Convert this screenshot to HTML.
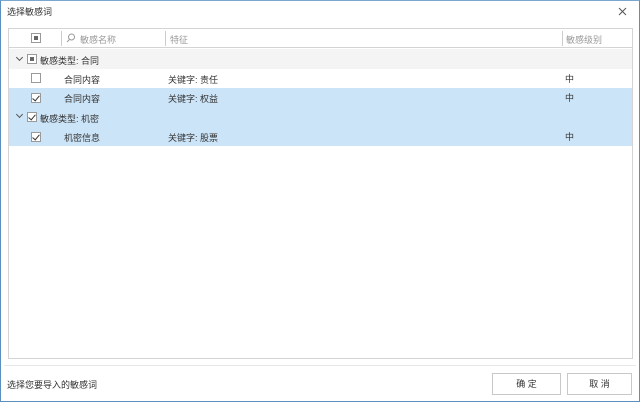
<!DOCTYPE html>
<html><head><meta charset="utf-8"><style>
*{margin:0;padding:0;box-sizing:border-box}
body{width:640px;height:402px;background:#fff;font-family:"Liberation Sans","Noto Sans CJK SC",sans-serif;font-size:9px;color:#333;position:relative;overflow:hidden}
.win{position:absolute;left:0;top:0;width:640px;height:402px;border:1px solid #5a8fc0;border-top:1px solid #7aa7d0}
.abs{position:absolute;white-space:nowrap}
.grid{position:absolute;left:8px;top:28px;width:625px;height:331px;border:1px solid #d4d4d4}
.row{position:absolute;left:0;width:623px}
.cb{position:absolute;width:10px;height:10px;border:1px solid #9a9a9a;background:#fff}
.cb.ind::after{content:"";position:absolute;left:2px;top:2px;width:4px;height:4px;background:#666}
.cb.chk::after{content:"";position:absolute;left:2px;top:0px;width:3px;height:6px;border-right:1.3px solid #333;border-bottom:1.3px solid #333;transform:rotate(40deg)}
.sep{position:absolute;top:2px;width:1px;height:15px;background:#ccc}
.chev{position:absolute;width:5px;height:5px;border-right:1.2px solid #555;border-bottom:1.2px solid #555;transform:rotate(45deg)}
.btn{position:absolute;top:373px;height:22px;border:1px solid #c8c8c8;background:#fff;text-align:center;line-height:20px;font-size:9px}
</style></head><body><div class="win"></div>
<div class="abs" style="left:7px;top:5px;font-size:9px;color:#333">选择敏感词</div>
<svg class="abs" style="left:618px;top:7px" width="9" height="9"><path d="M1 1L8 8M8 1L1 8" stroke="#555" stroke-width="1"/></svg>
<div class="grid">
 <div class="row" style="top:0;height:19px;border-bottom:1px solid #d4d4d4">
  <div class="cb ind" style="left:22px;top:4px"></div>
  <div class="sep" style="left:52px"></div>
  <svg class="abs" style="left:57px;top:4px" width="10" height="10"><circle cx="5.5" cy="4" r="3" fill="none" stroke="#999"/><path d="M3.5 6.5L1 9" stroke="#999"/></svg>
  <div class="abs" style="left:71px;top:4px;color:#999">敏感名称</div>
  <div class="sep" style="left:156px"></div>
  <div class="abs" style="left:161px;top:4px;color:#999">特征</div>
  <div class="sep" style="left:553px"></div>
  <div class="abs" style="left:557px;top:4px;color:#999">敏感级别</div>
 </div>
 <div class="row" style="top:20px;height:20px;background:#f4f4f4">
  <div class="chev" style="left:8px;top:6px"></div>
  <div class="cb ind" style="left:18px;top:5px"></div>
  <div class="abs" style="left:31px;top:5px">敏感类型: 合同</div>
 </div>
 <div class="row" style="top:40px;height:19px">
  <div class="cb" style="left:22px;top:4px"></div>
  <div class="abs" style="left:55px;top:4px">合同内容</div>
  <div class="abs" style="left:159px;top:4px">关键字: 责任</div>
  <div class="abs" style="left:556px;top:3px">中</div>
 </div>
 <div class="row" style="top:59px;height:58px;background:#cce4f7"></div>
 <div class="row" style="top:59px;height:19px">
  <div class="cb chk" style="left:22px;top:5px"></div>
  <div class="abs" style="left:55px;top:4px">合同内容</div>
  <div class="abs" style="left:159px;top:4px">关键字: 权益</div>
  <div class="abs" style="left:556px;top:3px">中</div>
 </div>
 <div class="row" style="top:78px;height:20px">
  <div class="chev" style="left:8px;top:5px"></div>
  <div class="cb chk" style="left:18px;top:5px"></div>
  <div class="abs" style="left:31px;top:5px">敏感类型: 机密</div>
 </div>
 <div class="row" style="top:98px;height:19px">
  <div class="cb chk" style="left:22px;top:5px"></div>
  <div class="abs" style="left:55px;top:4px">机密信息</div>
  <div class="abs" style="left:159px;top:4px">关键字: 股票</div>
  <div class="abs" style="left:556px;top:3px">中</div>
 </div>
</div>
<div class="abs" style="left:4px;top:365px;width:632px;height:1px;background:#e8e8e8"></div>
<div class="abs" style="left:7px;top:378px">选择您要导入的敏感词</div>
<div class="btn" style="left:492px;width:69px">确 定</div>
<div class="btn" style="left:567px;width:65px">取 消</div>
</body></html>
